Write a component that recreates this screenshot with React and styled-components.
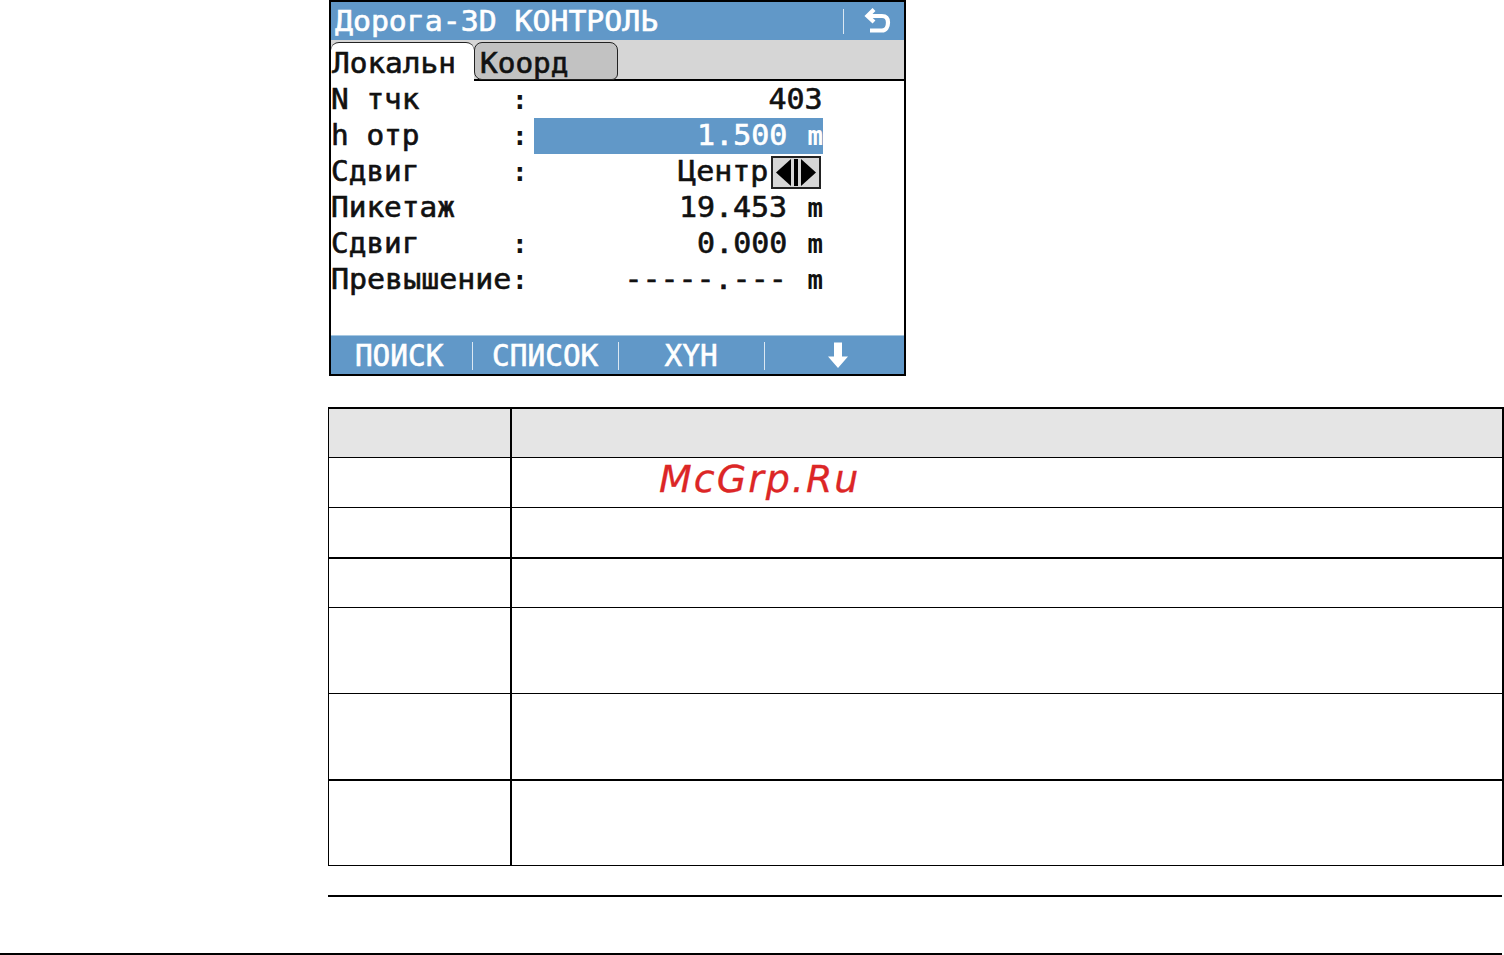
import React from 'react';
import styled, { createGlobalStyle } from 'styled-components';

const Global = createGlobalStyle`
  html, body { margin: 0; padding: 0; background: #fff; }
  #root { width: 1504px; height: 955px; overflow: hidden; }
`;
const Page = styled.div`
  width: 1504px; height: 955px; display: flex; flex-direction: column; background: #fff;
`;
const Content = styled.div`
  flex: 1; padding-left: 328px; display: flex; flex-direction: column; align-items: flex-start;
`;
const Device = styled.div`
  width: 577px; height: 376px; margin-left: 1px; box-sizing: border-box;
  border: 2px solid #000; display: flex; flex-direction: column; background: #fff;
  font-family: "DejaVu Sans Mono", monospace; color: #111; overflow: hidden;
`;
const TitleBar = styled.div`
  height: 38px; flex: none; background: #6198c8; color: #fff; display: flex; align-items: center;
  font-size: 28px; padding-left: 4px;
`;
const Stretched = styled.span`
  display: inline-block; transform-origin: left center; transform: scaleX(${p => p.$x || 1.05}); white-space: pre;
  font-weight: 400; -webkit-text-stroke: 0.6px currentColor;
`;
const TitleActions = styled.div`
  margin-left: auto; display: flex; align-items: center; gap: 19px; padding-right: 13px;
`;
const VLine = styled.i`
  display: block; width: 1px; height: 25px; background: #dbe8f3;
`;
const TabStrip = styled.div`
  height: 41px; flex: none; background: #d6d6d6; border-bottom: 2px solid #000; box-sizing: border-box;
  display: flex; align-items: flex-end; font-size: 28px;
`;
const Tab = styled.div`
  box-sizing: border-box; overflow: hidden;
  height: ${p => p.$active ? 39 : 38}px;
  padding-left: ${p => p.$active ? 1 : 5}px;
  width: ${p => p.$active ? 143 : 144}px; margin-bottom: ${p => p.$active ? -2 : -1}px;
  background: ${p => p.$active ? '#fff' : '#c2c2c2'};
  border: 1px solid #222; border-left-width: ${p => p.$active ? 0 : 1}px;
  border-bottom-width: ${p => p.$active ? 0 : 1}px;
  border-right-width: ${p => p.$active ? 0 : 1}px;
  border-radius: 8px 8px ${p => p.$active ? '0 0' : '6px 8px'};
  line-height: 41px; color: #111;
`;
const Rows = styled.div`
  display: flex; flex-direction: column; padding-top: 1px; flex: 1; font-size: 28px;
`;
const Row = styled.div`
  height: 36px; display: grid; grid-template-columns: 182px 21px 289px; align-items: center; line-height: 36px;
`;
const Label = styled.div` white-space: pre; `;
const Colon = styled.div` font-weight: 700; font-size: 26px; margin-left: -1px; `;
const Value = styled.div`
  height: 36px; display: flex; justify-content: flex-end; align-items: center;
  background: ${p => p.$hl ? '#6198c8' : 'transparent'};
  color: ${p => p.$hl ? '#fff' : '#111'};
  white-space: pre;
`;
const Num = styled.span`
  display: inline-block; transform-origin: right center; transform: scaleX(1.07); white-space: pre;
  font-weight: 400; -webkit-text-stroke: 0.6px currentColor;
`;
const Unit = styled.span`
  width: 16px; margin-left: 20px; text-align: center; display: inline-block;
  transform: scaleX(0.95); font-weight: 700; font-size: 27px;
`;
const Stepper = styled.div`
  width: 50px; height: 33px; box-sizing: border-box; border: 2px solid #222; background: #d6d6d6;
  margin-right: 2px; margin-left: 3px; display: flex; align-items: center; justify-content: center;
`;
const SoftKeys = styled.div`
  height: 39px; flex: none; background: #6198c8; color: #fff; border-top: 1px solid #a6c8e2; box-sizing: border-box;
  display: grid; grid-template-columns: repeat(4, 146px); font-size: 30px; align-items: center;
`;
const Key = styled.div`
  display: flex; align-items: center; justify-content: center; height: 30px; position: relative;
  padding-right: 9px;
  &:not(:last-child)::after {
    content: ''; position: absolute; right: 4px; top: 2px; width: 1px; height: 28px; background: #dbe8f3;
  }
`;
const KeyLabel = styled.span`
  display: inline-block; transform: scaleX(0.98); white-space: pre;
  font-weight: 400; -webkit-text-stroke: 0.6px currentColor;
`;
const Table = styled.div`
  margin-top: 31px; width: 1176px; height: 459px; box-sizing: border-box; position: relative;
  border-top: 2px solid #000; border-left: 1px solid #000; border-right: 2px solid #000; border-bottom: 1px solid #000;
  display: grid; grid-template-rows: 49px 50px 51px 49px 86px 87px 84px;
`;
const TableRow = styled.div`
  display: grid; grid-template-columns: 181px 1fr; background: ${p => p.$head ? '#e5e5e5' : '#fff'};
  border-bottom: ${p => p.$b ?? 1}px solid #000; box-sizing: border-box;
`;
const Cell = styled.div`
  & + & { border-left: 2px solid #000; }
`;
const Watermark = styled.div`
  position: absolute; left: 330px; top: 48px;
  font-family: "DejaVu Sans", sans-serif; font-style: italic; font-size: 38px; letter-spacing: 2px;
  -webkit-text-stroke: 0.3px currentColor;
  color: #dc2626; line-height: 44px; white-space: pre;
`;
const Rule = styled.div`
  margin-top: 29px; width: 1174px; height: 2px; background: #000;
`;
const Footer = styled.div`
  height: 2px; width: 1502px; background: #000; flex: none;
`;

const rows = [
  { l: 'N тчк', c: ':', v: <Num>403</Num> },
  { l: 'h отр', c: ':', hl: true, v: <><Num>1.500</Num><Unit>m</Unit></> },
  { l: 'Сдвиг', c: ':', stepper: true },
  { l: 'Пикетаж', c: '', v: <><Num>19.453</Num><Unit>m</Unit></> },
  { l: 'Сдвиг', c: ':', v: <><Num>0.000</Num><Unit>m</Unit></> },
  { l: 'Превышение', c: ':', v: <><Num>-----.---</Num><Unit>m</Unit></> },
];

export default function App() {
  return (
    <Page>
      <Global />
      <Content>
        <Device>
          <TitleBar>
            <Stretched $x={1.065}>Дорога-3D КОНТРОЛЬ</Stretched>
            <TitleActions>
              <VLine />
              <svg width="28" height="26" viewBox="0 0 28 26" fill="none" stroke="#fff" strokeWidth="4.200">
                <path d="M6 8h13c4 0 6 2.500 6 6.500s-2 8-6 8H7" />
                <path d="M11 1.500L4.500 8l6.500 6" />
              </svg>
            </TitleActions>
          </TitleBar>
          <TabStrip>
            <Tab $active><Stretched>Локальн</Stretched></Tab>
            <Tab><Stretched>Коорд</Stretched></Tab>
          </TabStrip>
          <Rows>
            {rows.map((r, i) => (
              <Row key={i}>
                <Label><Stretched $x={r.l === 'Превышение' ? 1.07 : 1.05}>{r.l}</Stretched></Label>
                <Colon>{r.c}</Colon>
                <Value $hl={r.hl}>
                  {r.stepper ? (
                    <>
                      <Num>Центр</Num>
                      <Stepper>
                        <svg width="46" height="27" viewBox="0 0 46 27" fill="#000">
                          <path d="M18 0v27L3 13.500z" />
                          <path d="M28 0v27l15-13.500z" />
                          <rect x="21" y="0" width="4" height="27" />
                        </svg>
                      </Stepper>
                    </>
                  ) : r.v}
                </Value>
              </Row>
            ))}
          </Rows>
          <SoftKeys>
            <Key><KeyLabel>ПОИСК</KeyLabel></Key>
            <Key><KeyLabel>СПИСОК</KeyLabel></Key>
            <Key><KeyLabel>XYH</KeyLabel></Key>
            <Key>
              <svg width="22" height="28" viewBox="0 0 22 28" fill="#fff">
                <path d="M7 1.500h8v14h6L11 27 1 15.500h6z" />
              </svg>
            </Key>
          </SoftKeys>
        </Device>
        <Table>
          <TableRow $head><Cell /><Cell /></TableRow>
          <TableRow><Cell /><Cell /></TableRow>
          <TableRow $b={2}><Cell /><Cell /></TableRow>
          <TableRow><Cell /><Cell /></TableRow>
          <TableRow><Cell /><Cell /></TableRow>
          <TableRow $b={2}><Cell /><Cell /></TableRow>
          <TableRow $b={0}><Cell /><Cell /></TableRow>
          <Watermark>McGrp.Ru</Watermark>
        </Table>
        <Rule />
      </Content>
      <Footer />
    </Page>
  );
}
